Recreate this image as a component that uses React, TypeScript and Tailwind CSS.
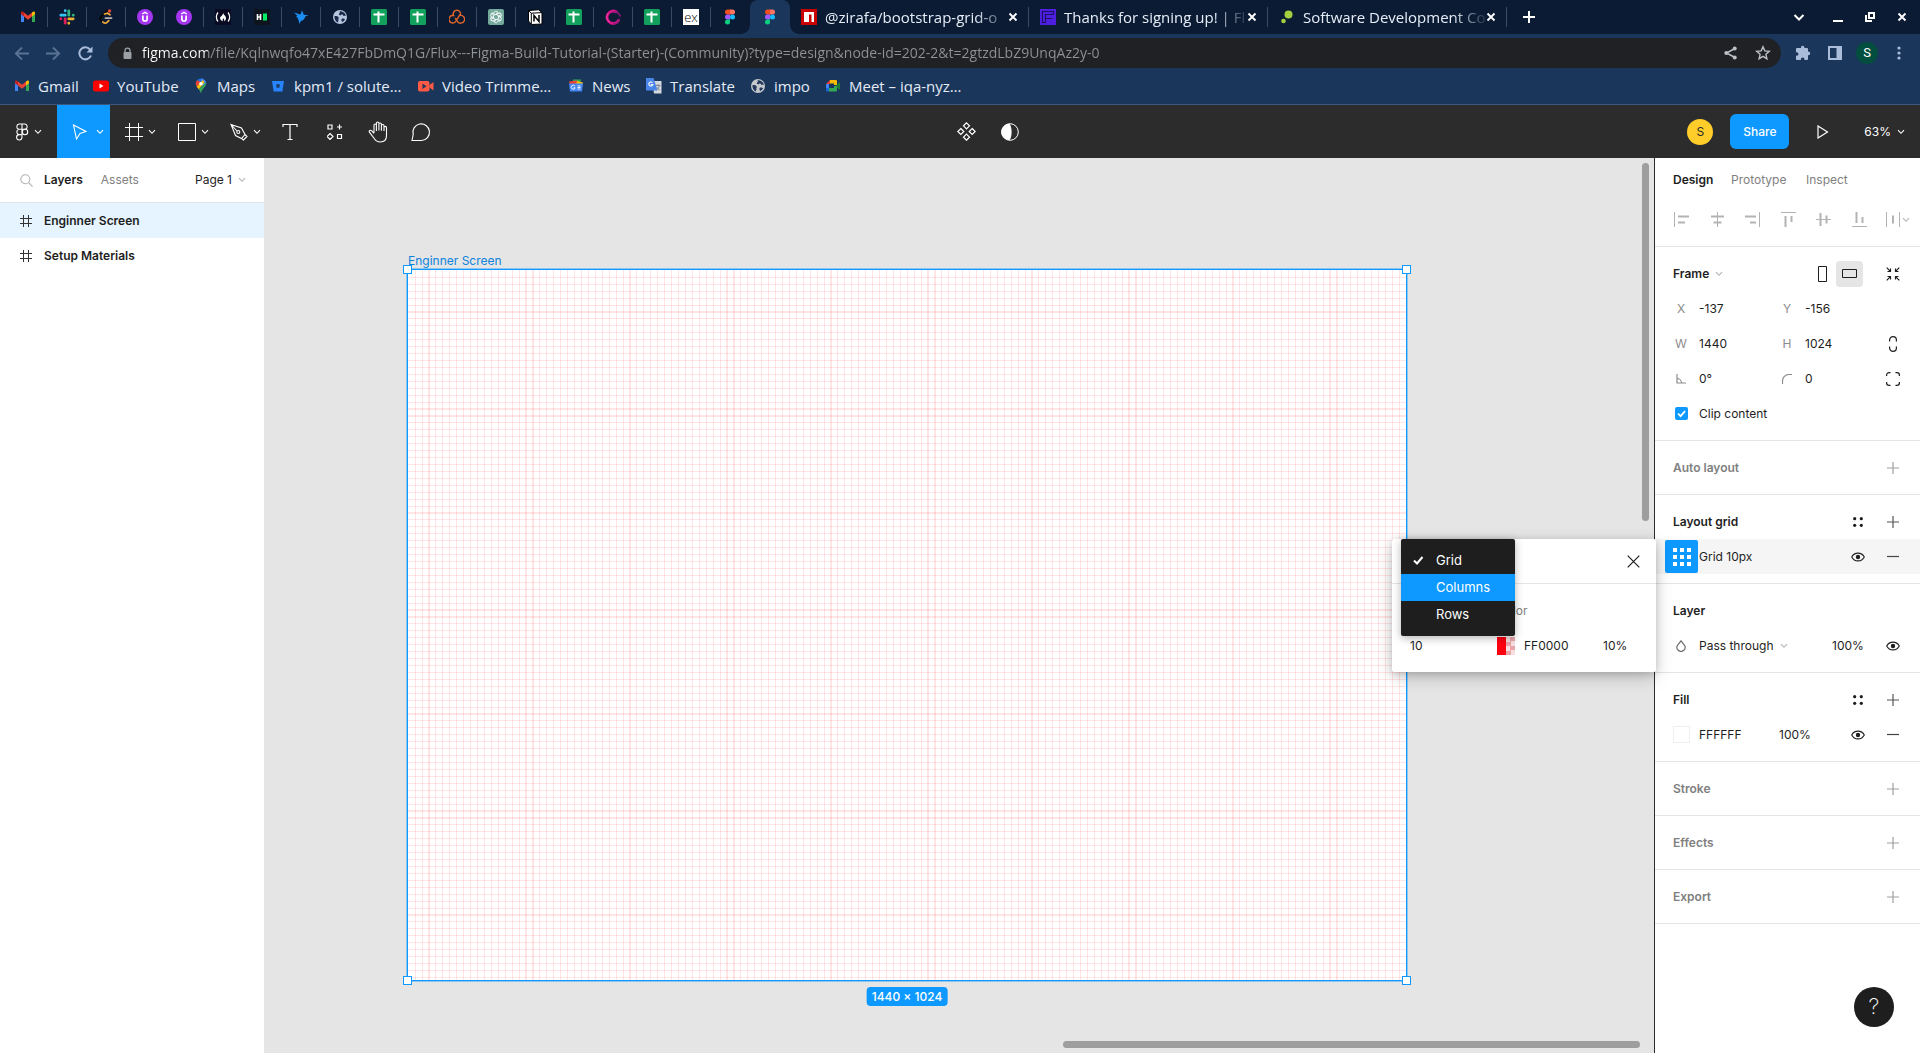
import React, { type ReactNode } from "react";

/* ---------- small shared drawings ---------- */

function Svg({ w, h = w, children, className = "" }: { w: number; h?: number; children: ReactNode; className?: string }) {
  return (
    <svg width={w} height={h} viewBox={`0 0 ${w} ${h}`} fill="none" aria-hidden="true" className={"shrink-0 " + className}>
      {children}
    </svg>
  );
}

const Chevron = ({ className = "" }: { className?: string }) => (
  <Svg w={8} h={6} className={className}>
    <path d="M1 1.2 4 4.3 7 1.2" stroke="currentColor" strokeWidth="1.1" />
  </Svg>
);

const Gmail = ({ size = 16 }: { size?: number }) => (
  <svg width={size} height={size} viewBox="0 0 16 16" aria-hidden="true" className="shrink-0">
    <path d="M1 4.5V13h3V7z" fill="#4285f4" />
    <path d="M15 4.5V13h-3V7z" fill="#34a853" />
    <path d="M12 3.6 13 2.8c1-.7 2 0 2 1v1.5L12 7.6z" fill="#fbbc04" />
    <path d="M4 3.6 3 2.8c-1-.7-2 0-2 1v1.5L4 7.6z" fill="#c5221f" />
    <path d="M4 3.6 8 6.8l4-3.2v4L8 10.7 4 7.6z" fill="#ea4335" />
  </svg>
);

const Slack = () => (
  <Svg w={16}>
    <g strokeWidth="2.8" strokeLinecap="round">
      <path d="M6.2 1.600v.2M1.800 6.200h4.400" stroke="#36c5f0" />
      <path d="M9.800 1.800v4.400M14.200 6.200h.1" stroke="#2eb67d" />
      <path d="M9.800 9.800h4.400M9.800 14.200v.1" stroke="#ecb22e" />
      <path d="M6.200 9.800v4.400M1.800 9.800h.1" stroke="#e01e5a" />
    </g>
  </Svg>
);

const LeetCode = () => (
  <Svg w={16}>
    <path d="M9.500 1.500 2.800 8.200c-.8.900-.8 2 0 2.900l2 2" stroke="#0a0a0a" strokeWidth="2" strokeLinecap="round" />
    <path d="M6.500 5 9.500 4.200 12 5.800M4.800 13c1.200 1.500 3 1.500 4.200.4l1.800-1.700" stroke="#f0a73a" strokeWidth="1.800" strokeLinecap="round" />
    <path d="M7.500 9.200h6" stroke="#b3b3b3" strokeWidth="1.800" strokeLinecap="round" />
    <circle cx="11.500" cy="2" r="1.800" fill="#e0483e" />
  </Svg>
);

const Udemy = () => (
  <Svg w={16}>
    <circle cx="8" cy="8" r="8" fill="#a435f0" />
    <path d="M5.300 5 8 3.400 10.700 5" stroke="#fff" strokeWidth="1.400" />
    <path d="M5.900 6.500v3.400c0 2.800 4.200 2.800 4.200 0V6.500" stroke="#fff" strokeWidth="1.700" />
  </Svg>
);

const FreeCodeCamp = () => (
  <Svg w={16}>
    <rect width="16" height="16" fill="#0a0a23" />
    <path d="M3 3.500C.8 6 .8 10 3 12.500M13 3.500c2.200 2.500 2.200 6.500 0 9" stroke="#fff" strokeWidth="1.200" />
    <path d="M8 3.500c.3 2.500 3 3 3 5.800 0 1.500-.8 2.500-2 3 .7-1.500 0-2.500-.7-3-.4 1-.9 1.200-.5 2.900-1.600-.4-2.700-1.500-2.700-3.200C5.100 7 8.500 6.500 8 3.500z" fill="#fff" />
  </Svg>
);

const HackerRank = () => (
  <Svg w={16}>
    <rect width="16" height="16" fill="#0e141e" />
    <path d="M3.500 5v6M6.500 5v6M3 8h4" stroke="#fff" strokeWidth="1.600" />
    <rect x="9" y="4.500" width="4" height="7" fill="#00ea64" />
  </Svg>
);

const Bird = () => (
  <Svg w={16}>
    <path d="M1 3.500 7.500 5.500 9 1.200l1.800 4.500 4.700.5-3.300 1.300C11.800 10 10 11.500 8 12l-2 3-.2-3.500C5 10.200 4.500 9.500 4.600 8.500L2.500 7.800l2-.8z" fill="#1c8ef2" />
  </Svg>
);

const Globe = ({ tint = "#b6c6de", land = "#1a2c4c" }: { tint?: string; land?: string }) => (
  <Svg w={16}>
    <circle cx="8" cy="8" r="7" fill={tint} />
    <path d="M2.500 7c1.800-.2 3.500.2 4.200 1.500.5 1-.7 1.300-.3 2.500.3.800-.4 1.800-1 2.400C3.400 12.200 2.200 9.800 2.500 7zM7.500 2.300c.8 1 .3 1.700-.4 2.200C6.500 5 7 6 8 6.200c1.200.3 1-.9 2.100-.7 1 .2.900 1.300 1.900 1.400.7 0 1.300-.5 1.800 0-.1-2.600-3.100-4.900-6.300-4.600zM10 9.500c1-.3 2.500 0 3 .8-.6 1.500-1.600 2.300-2.700 2.800-.9-1-1.300-2.800-.3-3.600z" fill={land} />
  </Svg>
);

const Sheets = () => (
  <Svg w={16}>
    <rect width="16" height="16" rx="1.500" fill="#12a15c" />
    <path d="M2.500 5.500h11M7.500 2.500v11" stroke="#fff" strokeWidth="2" />
  </Svg>
);

const CloudKnot = () => (
  <Svg w={16}>
    <path
      d="M4.500 6.500A3.700 3.700 0 1 1 11.300 6.400a3.900 3.900 0 1 1-2.700 6.200L6.500 9.500M10.800 5.800 8 10.300l-1 1.700A3.700 3.700 0 1 1 4.800 6.700"
      stroke="#e0662a"
      strokeWidth="1.400"
      strokeLinecap="round"
    />
  </Svg>
);

const ChatGpt = () => (
  <Svg w={16}>
    <rect width="16" height="16" rx="2" fill="#74aa9c" />
    <g stroke="#fff" strokeWidth=".9">
      {[0, 60, 120, 180, 240, 300].map((a) => (
        <path key={a} d="M8 5.200 6 6.300V4.200C6 2 9.200 1.600 10 3.400L8 4.600" transform={`rotate(${a} 8 8)`} />
      ))}
    </g>
  </Svg>
);

const Notion = () => (
  <Svg w={16}>
    <path d="M1.500 1.500 11.500.8 15 3.500V15l-10.500.5L1.500 12z" fill="#fff" stroke="#000" strokeWidth="1" />
    <path d="M4.300 4.200 15 3.600M4.300 4.200V15M4.300 4.200 1.600 1.700" stroke="#000" strokeWidth="1" />
    <path d="M7 12.500V6.500l5 6V6" stroke="#000" strokeWidth="1.500" />
  </Svg>
);

const Swirl = () => (
  <Svg w={16}>
    <path d="M14 10.500A6.200 6.200 0 1 1 12 3.300" stroke="#d6138b" strokeWidth="2.800" />
    <path d="M15.300 7.500C14.500 4.500 12 2.800 9 3" stroke="#8a1a78" strokeWidth="1.600" />
    <path d="M14.500 9.500c-.5 3-3 5-6 5" stroke="#8a1a78" strokeWidth="1.200" />
    <path d="M3 4.500A6 6 0 0 0 5 13.500" stroke="#f33fa9" strokeWidth="1" />
  </Svg>
);

const Express = () => (
  <span className="flex size-4 items-center justify-center bg-white pb-px font-['Open_Sans',sans-serif] text-[13px] leading-4 font-light text-black">ex</span>
);

const FigmaColor = () => (
  <Svg w={16}>
    <path d="M5.500.5H8v5H5.500a2.500 2.500 0 0 1 0-5z" fill="#f24e1e" />
    <path d="M8 .5h2.500a2.500 2.500 0 0 1 0 5H8z" fill="#ff7262" />
    <path d="M5.500 5.500H8v5H5.500a2.500 2.500 0 0 1 0-5z" fill="#a259ff" />
    <circle cx="10.500" cy="8" r="2.500" fill="#1abcfe" />
    <path d="M5.500 10.500H8V13a2.500 2.500 0 1 1-2.500-2.500z" fill="#0acf83" />
  </Svg>
);

const Npm = () => (
  <Svg w={16}>
    <rect width="16" height="16" fill="#cb0000" />
    <path d="M3 3h10v10h-2.500V5.500H8V13H3z" fill="#fff" />
  </Svg>
);

const Flux = () => (
  <Svg w={16}>
    <rect width="16" height="16" fill="#4f1fe0" />
    <path d="M2.500 13.500v-11h11v3H5.500v8zM5.500 9.500h7" stroke="#1a0f66" strokeWidth="1.100" />
  </Svg>
);

const GreenDots = () => (
  <Svg w={16}>
    <circle cx="9.500" cy="5.500" r="4" fill="#a4cf3f" />
    <circle cx="4.500" cy="12" r="2.300" fill="#a4cf3f" />
  </Svg>
);

/* ---------- browser chrome ---------- */

const pinned: { name: string; icon: ReactNode }[] = [
  { name: "Gmail", icon: <Gmail /> },
  { name: "Slack", icon: <Slack /> },
  { name: "LeetCode", icon: <LeetCode /> },
  { name: "Udemy", icon: <Udemy /> },
  { name: "Udemy course", icon: <Udemy /> },
  { name: "freeCodeCamp", icon: <FreeCodeCamp /> },
  { name: "HackerRank", icon: <HackerRank /> },
  { name: "Bird", icon: <Bird /> },
  { name: "Website", icon: <Globe /> },
  { name: "Sheet one", icon: <Sheets /> },
  { name: "Sheet two", icon: <Sheets /> },
  { name: "Cloud", icon: <CloudKnot /> },
  { name: "ChatGPT", icon: <ChatGpt /> },
  { name: "Notion", icon: <Notion /> },
  { name: "Sheet three", icon: <Sheets /> },
  { name: "Swirl", icon: <Swirl /> },
  { name: "Sheet four", icon: <Sheets /> },
  { name: "Express", icon: <Express /> },
  { name: "Figma", icon: <FigmaColor /> },
];

const openTabs: { title: string; icon: ReactNode }[] = [
  { title: "@zirafa/bootstrap-grid-o", icon: <Npm /> },
  { title: "Thanks for signing up! | Fl", icon: <Flux /> },
  { title: "Software Development Co", icon: <GreenDots /> },
];

const CloseX = () => (
  <Svg w={10}>
    <path d="m1.500 1.500 7 7M8.500 1.500l-7 7" stroke="currentColor" strokeWidth="1.900" />
  </Svg>
);

function TabStrip() {
  return (
    <div className="flex h-[34px] items-center bg-[#0b1b33] pl-[9px] text-[#e6edf7]">
      {pinned.map((t, i) => (
        <button key={t.name} aria-label={t.name} className={"flex h-5 w-[39px] shrink-0 items-center justify-center border-r " + (i < 18 ? "border-[#3c4b64]" : "border-transparent")}>
          {t.icon}
        </button>
      ))}
      <button aria-label="Figma file" className="relative flex h-[34px] w-10 shrink-0 items-center justify-center rounded-t-lg bg-[#1b365b]">
        <span className="absolute bottom-0 -left-2 size-2 bg-[radial-gradient(circle_at_0_0,transparent_7px,#1b365b_8px)]" />
        <FigmaColor />
        <span className="absolute -right-2 bottom-0 size-2 bg-[radial-gradient(circle_at_100%_0,transparent_7px,#1b365b_8px)]" />
      </button>
      {openTabs.map((t) => (
        <div key={t.title} className="flex h-5 w-[239px] shrink-0 items-center border-r border-[#3c4b64] pr-2.5 pl-[11px]">
          {t.icon}
          <button className="ml-2 flex-1 text-left text-[15px] leading-5 whitespace-nowrap [mask-image:linear-gradient(90deg,#000_82%,#0002_99%)]">{t.title}</button>
          <button aria-label={"Close " + t.title} className="text-white">
            <CloseX />
          </button>
        </div>
      ))}
      <button aria-label="New tab" className="ml-4 text-white">
        <Svg w={12}>
          <path d="M6 0v12M0 6h12" stroke="currentColor" strokeWidth="2" />
        </Svg>
      </button>
      <div className="mr-[13px] ml-auto flex items-center gap-[22px] text-white">
        <button aria-label="Search tabs" className="mr-1.5">
          <Svg w={12} h={10}>
            <path d="m1.500 3 4.500 4.500L10.500 3" stroke="currentColor" strokeWidth="2" />
          </Svg>
        </button>
        <button aria-label="Minimise">
          <Svg w={10}>
            <path d="M0 9h10" stroke="currentColor" strokeWidth="2" />
          </Svg>
        </button>
        <button aria-label="Restore">
          <Svg w={10}>
            <path d="M4 1h5v5H4zM1 3v6h6" stroke="currentColor" strokeWidth="2" />
          </Svg>
        </button>
        <button aria-label="Close window">
          <CloseX />
        </button>
      </div>
    </div>
  );
}

function AddressBar() {
  return (
    <div className="flex h-[38px] items-center pr-[18px] pl-[14px] text-[#a9bddb]">
      <div className="flex w-[94px] shrink-0 items-center gap-[17px]">
        <button aria-label="Back" className="text-[#5a7294]">
          <Svg w={15}>
            <path d="M8 1.500 1.800 7.500 8 13.500M2 7.500h13" stroke="currentColor" strokeWidth="1.800" />
          </Svg>
        </button>
        <button aria-label="Forward" className="text-[#5a7294]">
          <Svg w={15}>
            <path d="m7 1.500 6.200 6-6.200 6M13 7.500H0" stroke="currentColor" strokeWidth="1.800" />
          </Svg>
        </button>
        <button aria-label="Reload">
          <Svg w={15}>
            <path d="M13 9.500A6 6 0 1 1 12 3.500" stroke="currentColor" strokeWidth="2" />
            <path d="M14.500.5v6h-6z" fill="currentColor" />
          </Svg>
        </button>
      </div>
      <div className="flex h-[30px] flex-1 items-center rounded-full bg-[#202124] pr-2.5 pl-3">
        <Svg w={11} h={13} className="ml-0.5">
          <rect x="1.500" y="5" width="8" height="7" rx="1" fill="#9aa0a6" />
          <path d="M3 5V3.600a2.500 2.500 0 0 1 5 0V5" stroke="#9aa0a6" strokeWidth="1.300" />
        </Svg>
        <input
          aria-label="Address"
          defaultValue="figma.com/file/Kqlnwqfo47xE427FbDmQ1G/Flux---Figma-Build-Tutorial-(Starter)-(Community)?type=design&node-id=202-2&t=2gtzdLbZ9UnqAz2y-0"
          className="ml-[9px] w-0 flex-1 bg-[linear-gradient(90deg,#ffffff_66px,#8f9296_66px)] bg-clip-text text-sm leading-5 text-transparent outline-none"
        />
        <button aria-label="Share page" className="ml-4 text-[#bdc1c6]">
          <Svg w={13} h={14}>
            <path d="M11 2.500 2.500 7l8.500 4.500" stroke="currentColor" strokeWidth="1.500" />
            <circle cx="10.700" cy="2.500" r="2" fill="currentColor" />
            <circle cx="2.300" cy="7" r="2" fill="currentColor" />
            <circle cx="10.700" cy="11.500" r="2" fill="currentColor" />
          </Svg>
        </button>
        <button aria-label="Bookmark" className="ml-[18px] text-[#bdc1c6]">
          <Svg w={16}>
            <path d="m8 1.800 1.800 4.100 4.500.4-3.400 3 1 4.400L8 11.400l-3.900 2.300 1-4.400-3.400-3 4.500-.4z" stroke="currentColor" strokeWidth="1.400" />
          </Svg>
        </button>
      </div>
      <button aria-label="Extensions" className="ml-[14px]">
        <Svg w={16}>
          <path d="M6 2.500a1.700 1.700 0 0 1 3.400 0V3H12a1 1 0 0 1 1 1v2.600h.4a1.800 1.800 0 0 1 0 3.600H13V14a1 1 0 0 1-1 1H9.500v-.7a1.800 1.800 0 0 0-3.600 0v.7H2a1 1 0 0 1-1-1v-3.200h.7a1.800 1.800 0 0 0 0-3.600H1V4a1 1 0 0 1 1-1h4z" fill="currentColor" />
        </Svg>
      </button>
      <button aria-label="Side panel" className="ml-4">
        <Svg w={16}>
          <path d="M2 2h12v12H2z" stroke="currentColor" strokeWidth="2" />
          <path d="M9.500 2H15v12H9.500z" fill="currentColor" />
        </Svg>
      </button>
      <button aria-label="Profile" className="ml-[13px] flex size-[22px] items-center justify-center rounded-full bg-[#044e3f] font-['Roboto',sans-serif] text-[13px] text-white">
        S
      </button>
      <button aria-label="Browser menu" className="ml-[18px]">
        <Svg w={6} h={14}>
          <circle cx="3" cy="2" r="1.600" fill="currentColor" />
          <circle cx="3" cy="7" r="1.600" fill="currentColor" />
          <circle cx="3" cy="12" r="1.600" fill="currentColor" />
        </Svg>
      </button>
    </div>
  );
}

const bookmarks: { label: string; width: string; icon: ReactNode }[] = [
  { label: "Gmail", width: "w-[79px]", icon: <Gmail /> },
  { label: "YouTube", width: "w-[100px]", icon: (
    <Svg w={16}>
      <rect y="2.500" width="16" height="11" rx="2.500" fill="#f00" />
      <path d="m6.500 5.500 4 2.500-4 2.500z" fill="#fff" />
    </Svg>
  ) },
  { label: "Maps", width: "w-[77px]", icon: (
    <Svg w={16}>
      <path d="M8 .5a5.300 5.300 0 0 0-4 1.800L8 6z" fill="#1a73e8" />
      <path d="M8 .5c3 0 5.300 2.300 5.300 5.200L6 9.500 8 6z" fill="#4285f4" />
      <path d="M4 2.300A5.400 5.400 0 0 0 3.600 8.500L8 4z" fill="#ea4335" />
      <path d="M3.600 8.500 10 2l1.500 2.500-5.700 7z" fill="#fbbc04" />
      <path d="M13.200 4.500c.5 4.200-4.200 5.500-5.200 11-.5-1.700-1.200-3-2.200-4.200z" fill="#34a853" />
      <circle cx="8" cy="5.700" r="1.800" fill="#fff" />
    </Svg>
  ) },
  { label: "kpm1 / solute…", width: "w-[148px]", icon: (
    <Svg w={16}>
      <path d="M2 3h12l-1.700 10.500H3.700z" fill="#2684ff" />
      <path d="M6.200 6.300h3.600l-.5 3.500H6.700z" fill="#1b365b" />
    </Svg>
  ) },
  { label: "Video Trimme…", width: "w-[150px]", icon: (
    <Svg w={16}>
      <rect y="3" width="11.500" height="10.500" rx="2" fill="#ff5a44" />
      <path d="m11.500 7 4-3v8.500l-4-3z" fill="#ff5a44" />
      <path d="m4.500 5.500 4 2.700-4 2.700z" fill="#1b365b" />
    </Svg>
  ) },
  { label: "News", width: "w-[78px]", icon: (
    <Svg w={16}>
      <path d="M5 1.500h8l-1 4H4z" fill="#34a853" />
      <path d="m1 3.500 8-1 1 4-8 1z" fill="#ea4335" />
      <path d="m9 3 6 1.500-1 3-6-1z" fill="#fbbc04" />
      <path d="M1 5.500h14l-1 8H2z" fill="#4285f4" />
      <path d="M7 8.200a2 2 0 1 0 .2 1.600H5.500M9.500 8h3M9.500 9.500h3M9.500 11h3" stroke="#fff" strokeWidth=".9" />
    </Svg>
  ) },
  { label: "Translate", width: "w-[104px]", icon: (
    <Svg w={16}>
      <path d="M6 3h9.500v12.500H8z" fill="#d5d8dc" />
      <path d="M9.500 7.500h5M12 6v1.500M13.500 7.500c-.5 2-1.700 3.500-3 4.500M10.500 9c.7 1.300 2 2.500 3.300 3" stroke="#7a8088" strokeWidth=".9" />
      <path d="M0 0h7.500l4 12.500H0z" fill="#4a86e8" />
      <path d="M6.500 4.800a2 2 0 1 0 .3 1.700H4.800" stroke="#fff" strokeWidth="1.100" />
    </Svg>
  ) },
  { label: "impo", width: "w-[75px]", icon: <Globe tint="#c4c7cc" land="#23395c" /> },
  { label: "Meet – iqa-nyz…", width: "w-[160px]", icon: (
    <Svg w={16}>
      <path d="M1 6h3v4H1z" fill="#4285f4" />
      <path d="M1 10h3v3.500H2A1 1 0 0 1 1 12.500z" fill="#1967d2" />
      <path d="M1 6 5 2v4z" fill="#ea4335" />
      <path d="M5 2h6a1 1 0 0 1 1 1v4H9V5.500H5z" fill="#fbbc04" />
      <path d="M4 10h5V8h3v4.500a1 1 0 0 1-1 1H4z" fill="#34a853" />
      <path d="M11.500 7 15 4v8l-3.500-3z" fill="#188038" />
    </Svg>
  ) },
];

function Bookmarks() {
  return (
    <nav className="flex h-[33px] items-center border-b border-[#3b567f] pb-1 pl-[14px] text-[15px] leading-5 text-[#e3ebf7]">
      {bookmarks.map((b) => (
        <a key={b.label} href="#" className={"flex shrink-0 items-center gap-2 whitespace-nowrap " + b.width}>
          {b.icon}
          {b.label}
        </a>
      ))}
    </nav>
  );
}

/* ---------- editor toolbar ---------- */

function Tool({ label, width, children, active, caret }: { label: string; width: string; children: ReactNode; active?: boolean; caret?: boolean }) {
  return (
    <button aria-label={label} className={"flex h-full shrink-0 items-center justify-center " + width + (active ? " gap-2 bg-[#0d99ff]" : " gap-[5px]")}>
      {children}
      {caret && <Chevron />}
    </button>
  );
}

function Toolbar() {
  return (
    <header className="grid h-[53px] shrink-0 grid-cols-[1fr_auto_1fr] items-center bg-[#2c2c2c] text-white">
      <div className="flex h-full items-center">
        <Tool label="Main menu" width="w-[57px]" caret>
          <Svg w={14} h={18}>
            <path d="M7 1H4a2.700 2.700 0 0 0 0 5.300h3zM7 1h3a2.700 2.700 0 0 1 0 5.300H7zM7 6.300H4a2.700 2.700 0 0 0 0 5.300h3zM7 11.600H4A2.700 2.700 0 1 0 7 14.300z" stroke="currentColor" strokeWidth="1.100" />
            <circle cx="10" cy="9" r="2.700" stroke="currentColor" strokeWidth="1.100" />
          </Svg>
        </Tool>
        <Tool label="Move" width="w-[53px]" active caret>
          <Svg w={16} className="ml-2">
            <path d="M1.500 1 14 7.500 8 9.500 4.500 15z" stroke="currentColor" strokeWidth="1.100" />
          </Svg>
        </Tool>
        <Tool label="Frame" width="w-[60px]" caret>
          <Svg w={18}>
            <path d="M4.500 0v18M13.500 0v18M0 4.500h18M0 13.500h18" stroke="currentColor" />
          </Svg>
        </Tool>
        <Tool label="Shape" width="w-[46px]" caret>
          <Svg w={18}>
            <path d="M.5.5h17v17H.5z" stroke="currentColor" />
          </Svg>
        </Tool>
        <Tool label="Pen" width="w-[58px]" caret>
          <Svg w={18}>
            <path d="M1 1.500 11.500 5 15 11.500 11.500 15.500 5.500 12.500zM1 1.500 7 8M15 11.500 17 13.500 13.500 17 11.500 15.500" stroke="currentColor" strokeWidth="1.100" />
            <circle cx="8.300" cy="9" r="1.500" stroke="currentColor" strokeWidth="1.100" />
          </Svg>
        </Tool>
        <Tool label="Text" width="w-[32px]">
          <Svg w={16} h={18}>
            <path d="M1 4V1.500h14V4M8 1.500v15M5.500 16.500h5" stroke="currentColor" strokeWidth="1.200" />
          </Svg>
        </Tool>
        <Tool label="Resources" width="w-[58px]">
          <Svg w={16}>
            <path d="M1 1h4v4H1zM10.500 10.500h4v4h-4zM12.500.5v5M10 3h5M3 9.500l3 3-3 3-3-3z" stroke="currentColor" strokeWidth="1.200" />
          </Svg>
        </Tool>
        <Tool label="Hand" width="w-[28px]">
          <Svg w={20} h={22}>
            <path d="M6 12V4.300c0-1.700 2.400-1.700 2.400 0V10M8.400 9V2.300c0-1.700 2.500-1.700 2.500 0V9.500M10.900 9V3.300c0-1.700 2.500-1.700 2.500 0v6.500M13.400 6.500V4.800c0-1.700 2.600-1.700 2.600 0V10M16 6.500c.2-1.500 2.500-1.500 2.500.3v7.700c0 4-2.500 6.500-6.300 6.500-3 0-4.500-1.200-6-3.500l-4.800-6.300c-.8-1.300 1-2.600 2.200-1.500L6 12.300" stroke="currentColor" strokeWidth="1.100" />
          </Svg>
        </Tool>
        <Tool label="Comment" width="w-[58px]">
          <Svg w={20}>
            <path d="M1 18.500 2.200 12.500A8.300 8.300 0 1 1 10.500 18.500z" stroke="currentColor" strokeWidth="1.100" />
          </Svg>
        </Tool>
      </div>
      <div className="flex items-center gap-[25px] pl-14">
        <button aria-label="Create component">
          <Svg w={19}>
            <path d="m9.500.8 3 3-3 3-3-3zM9.500 12.200l3 3-3 3-3-3zM3.800 6.500l3 3-3 3-3-3zM15.200 6.500l3 3-3 3-3-3z" stroke="currentColor" strokeWidth="1.200" />
          </Svg>
        </button>
        <button aria-label="Use as mask">
          <Svg w={18}>
            <circle cx="9" cy="9" r="8.300" stroke="currentColor" />
            <path d="M8.500.7a8.300 8.300 0 0 0 0 16.600C11.300 14 11.300 4 8.500.7z" fill="currentColor" />
          </Svg>
        </button>
      </div>
      <div className="flex items-center justify-end pr-[15px]">
        <button aria-label="Account" className="flex size-[26px] items-center justify-center rounded-full bg-[#ffcd29] text-xs text-[#2c2c2c]">
          S
        </button>
        <button className="ml-[17px] h-[35px] w-[59px] rounded-md bg-[#0d99ff] text-xs font-medium">Share</button>
        <button aria-label="Present" className="ml-7">
          <Svg w={12} h={14}>
            <path d="m1 1 9.500 6L1 13z" stroke="currentColor" strokeWidth="1.200" />
          </Svg>
        </button>
        <button className="ml-[35px] flex items-center gap-1.5 text-xs">
          63% <Chevron />
        </button>
      </div>
    </header>
  );
}

/* ---------- left panel ---------- */

function LayersPanel() {
  return (
    <aside className="w-[264px] shrink-0 bg-white">
      <div className="flex h-[45px] items-center border-b border-[#e5e5e5] pr-[18px] pl-5">
        <button aria-label="Search" className="text-[#b3b3b3]">
          <Svg w={13}>
            <circle cx="5.300" cy="5.300" r="4.500" stroke="currentColor" strokeWidth="1.100" />
            <path d="m8.600 8.600 4 4" stroke="currentColor" strokeWidth="1.100" />
          </Svg>
        </button>
        <button className="ml-[11px] font-semibold">Layers</button>
        <button className="ml-[18px] text-[#808080]">Assets</button>
        <button className="ml-auto flex items-center gap-1.5">
          Page 1 <Chevron className="text-[#b3b3b3]" />
        </button>
      </div>
      {["Enginner Screen", "Setup Materials"].map((name, i) => (
        <button key={name} className={"flex h-[35px] w-full items-center gap-3 pl-5 text-left font-semibold " + (i === 0 ? "bg-[#e5f4ff]" : "")}>
          <Svg w={12}>
            <path d="M3.500 0v12M8.500 0v12M0 3.500h12M0 8.500h12" stroke="#333" />
          </Svg>
          {name}
        </button>
      ))}
    </aside>
  );
}

/* ---------- canvas ---------- */

const STEP = 6.931;

/* Snaps a grid line to whole pixels; a line near a pixel edge covers two. */
function snap(base: number, k: number) {
  const p = base + STEP * k;
  const from = Math.floor(p - 0.05);
  return { from, size: Math.floor(p + 0.05) - from + 1 };
}

const columns = Array.from({ length: 143 }, (_, i) => snap(0.207, i + 1));
const rows = Array.from({ length: 102 }, (_, i) => snap(0.414, i + 1));

function Canvas() {
  return (
    <section aria-label="Canvas" className="relative min-w-0 flex-1 overflow-hidden bg-[#e5e5e5]">
      <div className="absolute top-28 left-36 h-[710px] w-[998px] bg-white shadow-[0_0_0_2px_#0d99ff66] outline outline-[#0d99ff]">
        <div className="absolute bottom-full left-0 mb-px text-[#0d83dc]">Enginner Screen</div>
        <svg viewBox="0 0 998 710" className="h-full w-full" shapeRendering="crispEdges" fill="#ff0000" fillOpacity="0.1" aria-hidden="true">
          {columns.map((c) => (
            <rect key={c.from} x={c.from} y="0" width={c.size} height="710" />
          ))}
          {rows.map((r) => (
            <rect key={r.from} x="0" y={r.from} width="998" height={r.size} />
          ))}
        </svg>
        <span className="absolute -top-[5px] -left-[5px] size-[9px] border border-[#0d99ff] bg-white" />
        <span className="absolute -top-[5px] -right-[5px] size-[9px] border border-[#0d99ff] bg-white" />
        <span className="absolute -bottom-[5px] -left-[5px] size-[9px] border border-[#0d99ff] bg-white" />
        <span className="absolute -right-[5px] -bottom-[5px] size-[9px] border border-[#0d99ff] bg-white" />
        <div className="absolute top-full left-1/2 mt-[7px] -translate-x-1/2 rounded-sm bg-[#0d99ff] px-[5px] leading-[19px] font-medium whitespace-nowrap text-white">1440 × 1024</div>
      </div>
      <div className="absolute top-[5px] right-[5px] h-[358px] w-[7px] rounded-full bg-[#9e9e9e]" />
      <div className="absolute right-[14px] bottom-[5px] h-[7px] w-[577px] rounded-full bg-[#9e9e9e]" />
    </section>
  );
}

/* ---------- right panel ---------- */

function IconCell({ label, children, className = "" }: { label: string; children: ReactNode; className?: string }) {
  return (
    <button aria-label={label} className={"flex h-[35px] w-[35px] shrink-0 items-center justify-center " + className}>
      {children}
    </button>
  );
}

const Plus = () => (
  <Svg w={12}>
    <path d="M6 0v12M0 6h12" stroke="currentColor" strokeWidth="1.200" />
  </Svg>
);
const Minus = () => (
  <Svg w={12}>
    <path d="M0 5.500h12" stroke="#444" strokeWidth="1.200" />
  </Svg>
);
const Eye = () => (
  <Svg w={14} h={10}>
    <path d="M.7 5C3.400-.2 10.600-.2 13.300 5 10.600 10.200 3.400 10.200.7 5z" stroke="#1e1e1e" strokeWidth="1.100" />
    <circle cx="7" cy="5" r="2.200" fill="#1e1e1e" />
  </Svg>
);
const Dots = () => (
  <Svg w={10}>
    {[1.7, 8.3].map((x) => [1.7, 8.3].map((y) => <circle key={`${x}-${y}`} cx={x} cy={y} r="1.600" fill="#1e1e1e" />))}
  </Svg>
);

function Field({ id, label, icon, value }: { id: string; label: string; icon: ReactNode; value: string }) {
  return (
    <div className="flex min-w-0 items-center">
      <label htmlFor={id} aria-label={label} className="flex w-5 shrink-0 justify-center text-[#8c8c8c]">
        {icon}
      </label>
      <input id={id} defaultValue={value} className="ml-2 w-0 flex-1 bg-transparent outline-none" />
    </div>
  );
}

function FieldRow({ children }: { children: ReactNode }) {
  return <div className="grid h-[35px] grid-cols-[106px_1fr_35px] items-center pr-2.5 pl-4">{children}</div>;
}

function Section({ title, muted, children, actions }: { title?: string; muted?: boolean; children?: ReactNode; actions?: ReactNode }) {
  return (
    <section className="border-b border-[#e5e5e5] py-[9px]">
      {title && (
        <div className="flex h-[35px] items-center pr-2.5 pl-[18px]">
          <h2 className={"font-semibold " + (muted ? "text-[#808080]" : "")}>{title}</h2>
          <div className={"ml-auto flex " + (muted ? "text-[#a0a0a0]" : "text-[#555]")}>{actions}</div>
        </div>
      )}
      {children}
    </section>
  );
}

const alignIcons: { label: string; d: string; bars: string }[] = [
  { label: "Align left", d: "M.5 0v15", bars: "M4 4.500h11M4 10.500h7" },
  { label: "Align horizontal centers", d: "M7.500 0v15", bars: "M1 4.500h13M3.500 10.500h8" },
  { label: "Align right", d: "M14.500 0v15", bars: "M0 4.500h11M5 10.500h6" },
  { label: "Align top", d: "M0 .5h15", bars: "M4.500 4v11M10.500 4v6" },
  { label: "Align vertical centers", d: "M0 7.500h15", bars: "M4.500 1v13M10.500 3.500v8" },
  { label: "Align bottom", d: "M0 14.500h15", bars: "M4.500 0v11M10.500 5v6" },
  { label: "Distribute", d: "M.5 0v15M13.500 0v15", bars: "M7 3.500v8" },
];

function DesignPanel() {
  return (
    <aside className="w-[266px] shrink-0 border-l border-[#2c2c2c] bg-white">
      <div className="border-b border-[#e5e5e5] pb-[9px]">
        <div className="flex h-11 items-center pl-[18px] text-[#808080]">
          <button className="w-[58px] text-left font-semibold text-[#1e1e1e]">Design</button>
          <button className="w-[75px] text-left">Prototype</button>
          <button>Inspect</button>
        </div>
        <div className="flex justify-between pr-2 pl-[9px] text-[#b3b3b3]">
          {alignIcons.map((a) => (
            <IconCell key={a.label} label={a.label}>
              <Svg w={15} className={a.label === "Distribute" ? "ml-1.5" : ""}>
                <path d={a.d} stroke="currentColor" />
                <path d={a.bars} stroke="currentColor" strokeWidth="2" />
              </Svg>
              {a.label === "Distribute" && <Chevron className="ml-px" />}
            </IconCell>
          ))}
        </div>
      </div>

      <Section>
        <div className="flex h-[35px] items-center pr-2.5 pl-[18px]">
          <button className="flex items-center gap-1.5 font-semibold">
            Frame <Chevron className="text-[#b3b3b3]" />
          </button>
          <button aria-label="Portrait" className="ml-auto flex h-[26px] w-[27px] items-center justify-center">
            <Svg w={9} h={16}>
              <path d="M.5.5h8v15h-8z" stroke="#1e1e1e" />
            </Svg>
          </button>
          <button aria-label="Landscape" className="mr-3 flex h-[26px] w-[27px] items-center justify-center rounded-sm bg-[#e5e5e5]">
            <Svg w={15} h={9}>
              <path d="M.5.5h14v8H.5z" stroke="#1e1e1e" />
            </Svg>
          </button>
          <IconCell label="Resize to fit">
            <Svg w={14}>
              <path d="m.7.7 4 4M1.500 4.500h3v-3M13.300.7l-4 4M12.500 4.500h-3v-3M.7 13.300l4-4M1.500 9.500h3v3M13.300 13.300l-4-4M12.500 9.500h-3v3" stroke="#1e1e1e" strokeWidth="1.200" />
            </Svg>
          </IconCell>
        </div>
        <FieldRow>
          <Field id="x" label="X" icon="X" value="-137" />
          <Field id="y" label="Y" icon="Y" value="-156" />
        </FieldRow>
        <FieldRow>
          <Field id="w" label="W" icon="W" value="1440" />
          <Field id="h" label="H" icon="H" value="1024" />
          <IconCell label="Constrain proportions">
            <Svg w={8} h={16}>
              <path d="M.6 5.500V4a3.400 3.400 0 0 1 6.800 0v1.500M.6 10.500V12a3.400 3.400 0 0 0 6.800 0v-1.500" stroke="#1e1e1e" strokeWidth="1.200" />
            </Svg>
          </IconCell>
        </FieldRow>
        <FieldRow>
          <Field
            id="rotation"
            label="Rotation"
            icon={
              <Svg w={10}>
                <path d="M1 0v9h9M1 4.500c2.500 0 4.500 2 4.500 4.500" stroke="currentColor" strokeWidth="1.200" />
              </Svg>
            }
            value="0°"
          />
          <Field
            id="radius"
            label="Corner radius"
            icon={
              <Svg w={10}>
                <path d="M.5 10V7A6.500 6.500 0 0 1 7 .5h3" stroke="currentColor" strokeWidth="1.200" />
              </Svg>
            }
            value="0"
          />
          <IconCell label="Independent corners">
            <Svg w={14}>
              <path d="M.6 4V3A2.400 2.400 0 0 1 3 .6h1.500M9.500.6H11A2.400 2.400 0 0 1 13.400 3v1M13.400 10v1a2.400 2.400 0 0 1-2.400 2.400H9.500M4.500 13.400H3A2.400 2.400 0 0 1 .6 11v-1" stroke="#1e1e1e" strokeWidth="1.200" />
            </Svg>
          </IconCell>
        </FieldRow>
        <label className="flex h-[35px] items-center pl-5">
          <span className="relative mr-[11px] size-[13px]">
            <input type="checkbox" defaultChecked className="block size-[13px] appearance-none rounded-xs bg-[#0d99ff]" />
            <Svg w={13} className="pointer-events-none absolute inset-0">
              <path d="m3 6.500 2.600 2.700L10 4.200" stroke="#fff" strokeWidth="1.800" />
            </Svg>
          </span>
          Clip content
        </label>
      </Section>

      <Section title="Auto layout" muted actions={<IconCell label="Add auto layout"><Plus /></IconCell>} />

      <Section title="Layout grid" actions={<><IconCell label="Grid styles"><Dots /></IconCell><IconCell label="Add grid"><Plus /></IconCell></>}>
        <div className="flex h-[35px] items-center bg-[#f5f5f5] pr-2.5 pl-2.5">
          <button aria-label="Grid settings" className="mr-px flex size-[33px] items-center justify-center rounded-xs bg-[#0d99ff]">
            <Svg w={18}>
              {[0, 7, 14].map((x) => [0, 7, 14].map((y) => <rect key={`${x}-${y}`} x={x} y={y} width="4" height="4" fill="#fff" />))}
            </Svg>
          </button>
          Grid 10px
          <IconCell label="Toggle grid" className="ml-auto"><Eye /></IconCell>
          <IconCell label="Remove grid"><Minus /></IconCell>
        </div>
      </Section>

      <Section title="Layer">
        <div className="flex h-[35px] items-center pr-2.5 pl-4">
          <span className="flex w-5 justify-center text-[#666]">
            <Svg w={10} h={12}>
              <path d="M5 .8 8 4.700a4 4 0 1 1-6 0z" stroke="currentColor" strokeWidth="1.100" />
            </Svg>
          </span>
          <button className="ml-2 flex items-center gap-1.5">
            Pass through <Chevron className="text-[#b3b3b3]" />
          </button>
          <input aria-label="Layer opacity" defaultValue="100%" className="ml-auto w-[43px] bg-transparent outline-none" />
          <IconCell label="Toggle layer"><Eye /></IconCell>
        </div>
      </Section>

      <Section title="Fill" actions={<><IconCell label="Fill styles"><Dots /></IconCell><IconCell label="Add fill"><Plus /></IconCell></>}>
        <div className="flex h-[35px] items-center pr-2.5 pl-[18px]">
          <button aria-label="Fill colour" className="size-[17px] border border-[#efefef] bg-white" />
          <input aria-label="Fill hex" defaultValue="FFFFFF" className="ml-[9px] w-20 bg-transparent outline-none" />
          <input aria-label="Fill opacity" defaultValue="100%" className="w-10 bg-transparent outline-none" />
          <IconCell label="Toggle fill" className="ml-auto"><Eye /></IconCell>
          <IconCell label="Remove fill"><Minus /></IconCell>
        </div>
      </Section>

      <Section title="Stroke" muted actions={<IconCell label="Add stroke"><Plus /></IconCell>} />
      <Section title="Effects" muted actions={<IconCell label="Add effect"><Plus /></IconCell>} />
      <Section title="Export" muted actions={<IconCell label="Add export"><Plus /></IconCell>} />
    </aside>
  );
}

/* ---------- grid settings popover ---------- */

function GridPopover() {
  return (
    <div role="dialog" aria-label="Grid settings" className="absolute top-[381px] right-[264px] w-[264px] rounded-xs bg-white shadow-[0_5px_17px_rgba(0,0,0,0.2),0_2px_7px_rgba(0,0,0,0.15)]">
      <div className="flex h-[45px] items-center justify-end border-b border-[#e5e5e5] pr-4">
        <button aria-label="Close">
          <Svg w={13}>
            <path d="m.7.7 11.600 11.600M12.300.7.7 12.300" stroke="#1e1e1e" strokeWidth="1.200" />
          </Svg>
        </button>
      </div>
      <div className="grid grid-cols-[87px_1fr] pt-[9px] pb-[9px] pl-[18px] text-[#808080]">
        <label htmlFor="grid-size" className="leading-[35px]">Size</label>
        <label htmlFor="grid-color" className="leading-[35px]">Color</label>
        <input id="grid-size" defaultValue="10" className="h-[35px] w-16 bg-transparent text-[#1e1e1e] outline-none" />
        <div className="flex h-[35px] items-center text-[#1e1e1e]">
          <span className="flex size-[18px]">
            <span className="w-1/2 bg-[#ff0011]" />
            <span className="w-1/2 bg-[conic-gradient(#e8a6ab_25%,#f8dfe1_0_50%,#e8a6ab_0_75%,#f8dfe1_0)] bg-size-[9px_9px]" />
          </span>
          <input id="grid-color" defaultValue="FF0000" className="ml-[9px] w-[79px] bg-transparent outline-none" />
          <input aria-label="Grid opacity" defaultValue="10%" className="w-10 bg-transparent outline-none" />
        </div>
      </div>
      <ul role="menu" className="absolute top-0 left-[9px] w-[114px] rounded-xs bg-[#1e1e1e] py-2 text-[13px] text-white shadow-[0_2px_8px_rgba(0,0,0,0.3)]">
        {["Grid", "Columns", "Rows"].map((item) => (
          <li key={item} role="none">
            <button role="menuitemradio" aria-checked={item === "Grid"} className={"flex h-[27px] w-full items-center " + (item === "Columns" ? "bg-[#0d99ff]" : "")}>
              <span className="flex w-[35px] justify-center">
                {item === "Grid" && (
                  <Svg w={11} h={9}>
                    <path d="m1 4.500 3 3L9.500 1" stroke="#fff" strokeWidth="2" />
                  </Svg>
                )}
              </span>
              {item}
            </button>
          </li>
        ))}
      </ul>
    </div>
  );
}

export default function App() {
  return (
    <div className="flex min-h-screen flex-col overflow-hidden font-['Inter',sans-serif] text-xs text-[#1e1e1e]">
      <div className="bg-[#1b365b] font-['Open_Sans','Noto_Sans',sans-serif]">
        <TabStrip />
        <AddressBar />
        <Bookmarks />
      </div>
      <Toolbar />
      <main className="relative flex flex-1">
        <LayersPanel />
        <Canvas />
        <DesignPanel />
        <GridPopover />
        <button aria-label="Help" className="absolute right-[26px] bottom-[26px] flex size-10 items-center justify-center rounded-full bg-[#1e1e1e] text-[22px] font-extralight text-white">
          ?
        </button>
      </main>
    </div>
  );
}
